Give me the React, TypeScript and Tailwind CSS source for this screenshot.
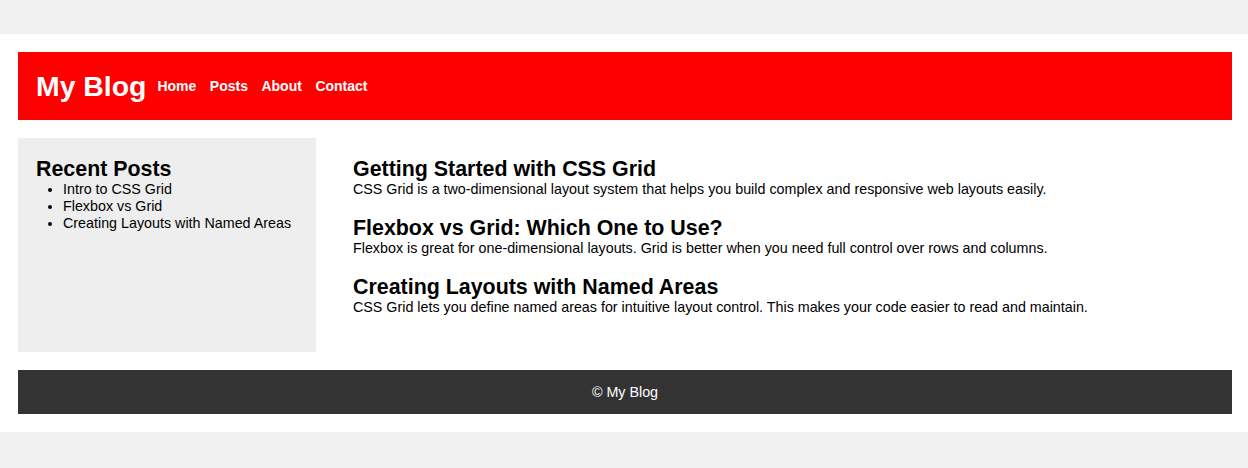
import React from 'react';

const posts = [
  {
    title: 'Getting Started with CSS Grid',
    body: 'CSS Grid is a two-dimensional layout system that helps you build complex and responsive web layouts easily.',
  },
  {
    title: 'Flexbox vs Grid: Which One to Use?',
    body: 'Flexbox is great for one-dimensional layouts. Grid is better when you need full control over rows and columns.',
  },
  {
    title: 'Creating Layouts with Named Areas',
    body: 'CSS Grid lets you define named areas for intuitive layout control. This makes your code easier to read and maintain.',
  },
];

const recent = ['Intro to CSS Grid', 'Flexbox vs Grid', 'Creating Layouts with Named Areas'];

const App: React.FC = () => {
  return (
    <div className="min-h-screen bg-[#f0f0f0] pt-[34px] font-['Liberation_Sans',Arial,sans-serif] text-[14.3px] leading-[17px] text-black">
      <div className="grid grid-cols-[298px_1fr] gap-[18px] bg-white py-[18px] pl-[18px] pr-[16px]">
        <header className="col-span-2 flex items-center bg-[#ff0000] px-[18px] py-[18px] text-white">
          <h1 className="text-[28.4px] font-bold leading-[32px]">My Blog</h1>
          <nav className="ml-[11px] flex gap-[13.5px] text-[14px] font-bold">
            <a href="#">Home</a>
            <a href="#">Posts</a>
            <a href="#">About</a>
            <a href="#">Contact</a>
          </nav>
        </header>

        <aside className="h-[214px] bg-[#eeeeee] px-[18px] pt-[19px]">
          <h2 className="text-[21.4px] font-bold leading-[24px]">Recent Posts</h2>
          <ul className="list-disc pl-[27px]">
            {recent.map((r) => (
              <li key={r}>{r}</li>
            ))}
          </ul>
        </aside>

        <main className="flex flex-col gap-[18px] pl-[19px] pr-[18px] pt-[19px]">
          {posts.map((p) => (
            <article key={p.title}>
              <h2 className="text-[21.4px] font-bold leading-[24px]">{p.title}</h2>
              <p>{p.body}</p>
            </article>
          ))}
        </main>

        <footer className="col-span-2 bg-[#333333] py-[13.5px] text-center text-white">
          © My Blog
        </footer>
      </div>
    </div>
  );
};

export default App;
